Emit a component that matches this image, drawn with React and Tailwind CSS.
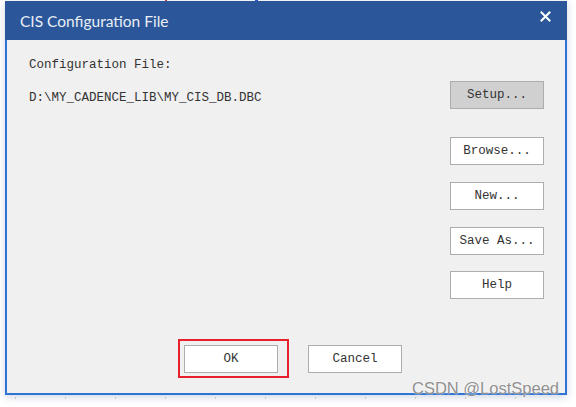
import React from "react";

const mono = { fontFamily: '"Liberation Mono", "DejaVu Sans Mono", monospace' };

function Btn({ children, className = "", gray = false }) {
  return (
    <div
      className={`w-[94px] h-[28px] flex items-center justify-center border border-[#adadad] text-[12.5px] text-[#333] pt-[1px] ${gray ? "bg-[#d0d0d0]" : "bg-white"} ${className}`}
      style={mono}
    >
      {children}
    </div>
  );
}

export default function App() {
  return (
    <div className="w-[576px] h-[407px] bg-white relative overflow-hidden">
      <div className="flex h-[1px]">
        <div className="ml-[165px] w-[2px] h-[1px] bg-[#c04040]" />
        <div className="ml-[88px] w-[3px] h-[1px] bg-[#3050e0]" />
      </div>
      <div className="ml-[5px] w-[562px] shadow-[0_2px_8px_rgba(60,90,140,0.25)]">
        <div className="h-[39px] bg-[#2b579a] flex items-center justify-between pl-[15px] pr-[16px]">
          <span
            className="text-[15.5px] text-[#e9eef6] pt-[2px]"
            style={{ fontFamily: 'Lato, "Open Sans", sans-serif' }}
          >
            CIS Configuration File
          </span>
          <svg width="11" height="11" viewBox="0 0 11 11" className="mb-[8px]">
            <path d="M1.5 1.5 L9.5 9.5 M9.5 1.5 L1.5 9.5" stroke="#ffffff" strokeWidth="2" strokeLinecap="square" />
          </svg>
        </div>
        <div className="h-[355px] bg-[#f0f0f0] border-x-2 border-b-2 border-[#2f73d4] flex flex-col">
          <div className="flex">
            <div className="flex-1 pl-[22px] pt-[17px] text-[12.5px] text-[#333]" style={mono}>
              <div className="h-[16px] leading-[16px]">Configuration File:</div>
              <div className="h-[16px] leading-[16px] mt-[17px]">D:\MY_CADENCE_LIB\MY_CIS_DB.DBC</div>
            </div>
            <div className="flex flex-col pt-[41px] mr-[21px]">
              <Btn gray>Setup...</Btn>
              <Btn className="mt-[28px]">Browse...</Btn>
              <Btn className="mt-[17px]">New...</Btn>
              <Btn className="mt-[17px]">Save As...</Btn>
              <Btn className="mt-[16px]">Help</Btn>
            </div>
          </div>
          <div className="flex items-start pl-[171px] mt-[40px]">
            <div className="w-[111px] h-[39px] border-2 border-[#e8202a] pl-[4px] pt-[4px]">
              <Btn className="w-[93px]">OK</Btn>
            </div>
            <Btn className="ml-[19px] mt-[6px] w-[93px]">Cancel</Btn>
          </div>
        </div>
      </div>
      <div className="flex gap-[49px] pl-[15px] mt-[2px]">
        {[0, 1, 2, 3, 4, 5, 6, 7, 8, 9, 10].map((i) => (
          <div key={i} className="w-[1px] h-[2px] bg-[#c8c8c8]" />
        ))}
      </div>
      <div
        className="absolute left-[412px] top-[378px] text-[16.5px] text-[#909090] leading-[20px]"
        style={{ fontFamily: '"Liberation Sans", Arial, sans-serif', textShadow: "0 0 2px #fff" }}
      >
        CSDN @LostSpeed
      </div>
    </div>
  );
}
